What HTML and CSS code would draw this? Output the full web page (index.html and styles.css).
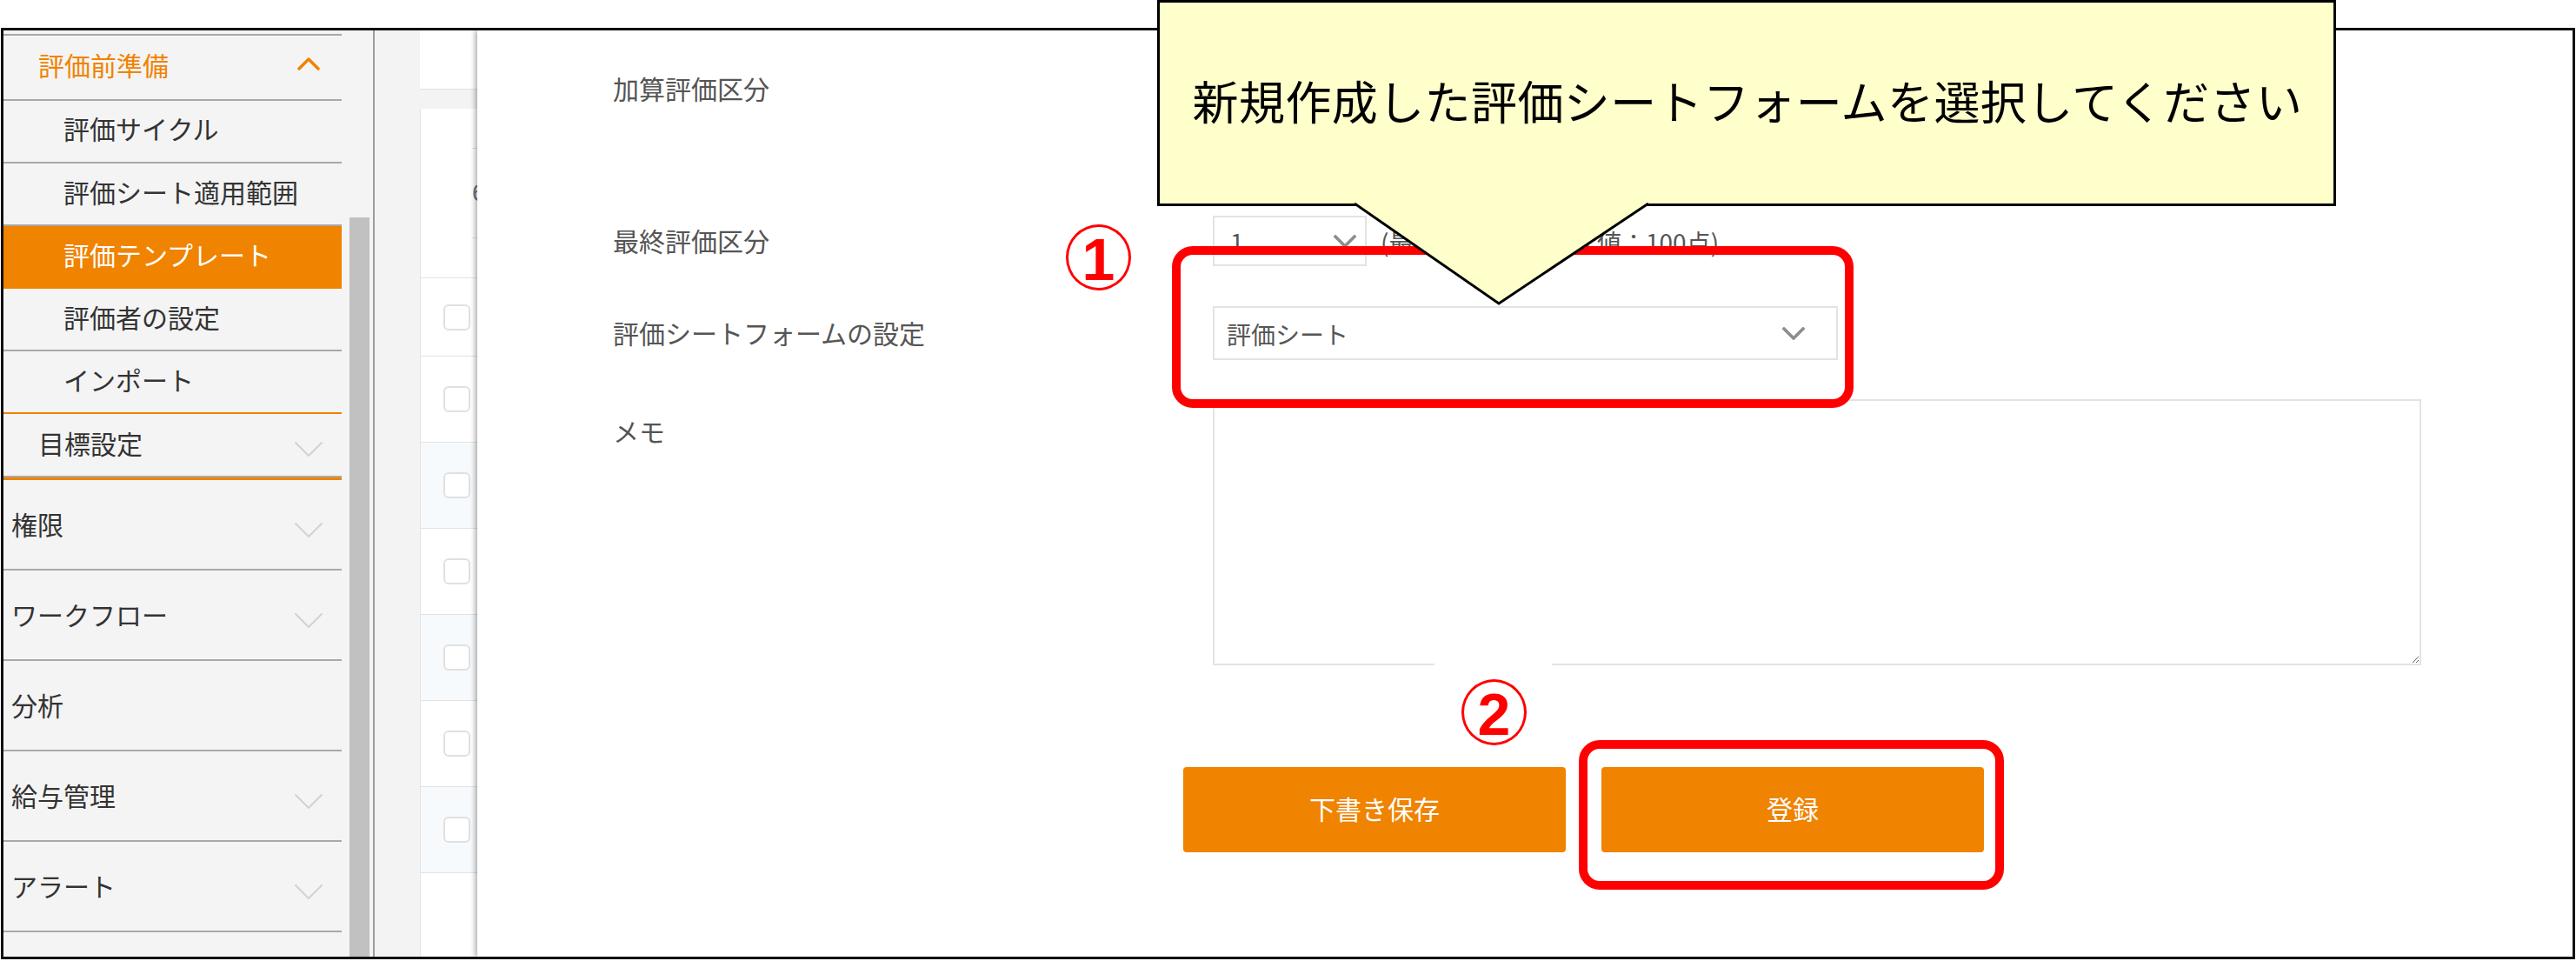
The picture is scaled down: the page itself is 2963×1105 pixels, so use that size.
FILE: index.html
```html
<!DOCTYPE html>
<html lang="ja">
<head>
<meta charset="utf-8">
<title>評価テンプレート</title>
<link rel="stylesheet" href="styles.css">
</head>
<body>
<div class="frame">
  <aside class="sidebar">
    <nav class="menu">
      <div class="menu-cut"></div>
      <div class="group">
        <div class="row grp open">
          <span>評価前準備</span>
          <svg class="chev up" viewBox="0 0 26 15" width="26" height="15"><polyline points="2,13 13,2 24,13"/></svg>
        </div>
        <div class="row sub">評価サイクル</div>
        <div class="row sub">評価シート適用範囲</div>
        <div class="row sub active">評価テンプレート</div>
        <div class="row sub">評価者の設定</div>
        <div class="row sub orange-line">インポート</div>
        <div class="row grp goal">
          <span>目標設定</span>
          <svg class="chev down" viewBox="0 0 32 18" width="32" height="18"><polyline points="1,1 16,16 31,1"/></svg>
        </div>
      </div>
      <div class="row top"><span>権限</span><svg class="chev down" viewBox="0 0 32 18" width="32" height="18"><polyline points="1,1 16,16 31,1"/></svg></div>
      <div class="row top"><span>ワークフロー</span><svg class="chev down" viewBox="0 0 32 18" width="32" height="18"><polyline points="1,1 16,16 31,1"/></svg></div>
      <div class="row top"><span>分析</span></div>
      <div class="row top"><span>給与管理</span><svg class="chev down" viewBox="0 0 32 18" width="32" height="18"><polyline points="1,1 16,16 31,1"/></svg></div>
      <div class="row top"><span>アラート</span><svg class="chev down" viewBox="0 0 32 18" width="32" height="18"><polyline points="1,1 16,16 31,1"/></svg></div>
    </nav>
    <div class="scroll"><div class="thumb"></div></div>
  </aside>

  <div class="gutter"></div>

  <section class="table-col">
    <div class="page-head"></div>
    <div class="table">
      <div class="thead"><div class="thead-inner">6</div></div>
      <div class="tr"><span class="cb"></span></div>
      <div class="tr"><span class="cb"></span></div>
      <div class="tr alt"><span class="cb"></span></div>
      <div class="tr"><span class="cb"></span></div>
      <div class="tr alt"><span class="cb"></span></div>
      <div class="tr"><span class="cb"></span></div>
      <div class="tr alt"><span class="cb"></span></div>
    </div>
  </section>

  <section class="modal">
    <div class="form-row r1">
      <label class="lbl">加算評価区分</label>
      <div class="field"></div>
    </div>
    <div class="form-row r2">
      <label class="lbl">最終評価区分</label>
      <div class="field inline">
        <div class="select small"><span>1</span><svg class="schev" viewBox="0 0 26 15" width="26" height="15"><polyline points="2,2 13,13 24,2"/></svg></div>
        <span class="note">(最小値：0点　最大値：100点)</span>
      </div>
    </div>
    <div class="form-row r3">
      <label class="lbl">評価シートフォームの設定</label>
      <div class="field">
        <div class="select wide"><span>評価シート</span><svg class="schev" viewBox="0 0 26 15" width="26" height="15"><polyline points="2,2 13,13 24,2"/></svg></div>
      </div>
    </div>
    <div class="form-row r4">
      <label class="lbl memo">メモ</label>
      <div class="field"><textarea class="memo-box"></textarea></div>
    </div>
    <div class="buttons">
      <button class="btn">下書き保存</button>
      <button class="btn">登録</button>
    </div>
  </section>
</div>

<div class="mark box1"></div>
<div class="mark box2"></div>
<div class="num n1"><span>1</span></div>
<div class="num-bg"><div class="num n2"><span>2</span></div></div>

<div class="tip">新規作成した評価シートフォームを選択してください</div>
<svg class="tip-arrow" viewBox="0 0 340 120" width="340" height="120">
  <polygon points="0,0 166,116 338,0" fill="#ffffcc"/>
  <polyline points="0,1 166,116 338,1" fill="none" stroke="#000" stroke-width="3"/>
</svg>
</body>
</html>
```

FILE: styles.css
```css
* { box-sizing: border-box; margin: 0; padding: 0; }
html, body { width: 2963px; height: 1105px; overflow: hidden; background: #fff; }
body {
  position: relative;
  font-family: "Noto Sans CJK JP", "Noto Sans", sans-serif;
  color: #333;
  padding-top: 32px;
  padding-left: 1px;
}

.frame {
  width: 2961px;
  height: 1071px;
  border: 3px solid #111;
  display: flex;
  overflow: hidden;
  background: #f3f3f3;
}

/* ---------- sidebar ---------- */
.sidebar {
  display: flex;
  width: 427px;
  flex: none;
  background: #f4f4f4;
  border-right: 2px solid #9c9c9c;
}
.menu { width: 389px; flex: none; }
.scroll { width: 36px; flex: none; padding: 215px 4px 0 9px; }
.thumb { width: 23px; height: 100%; background: #c1c1c1; }

.menu-cut { height: 6px; border-bottom: 2px solid #a9a9a9; }
.row {
  display: flex;
  align-items: center;
  justify-content: space-between;
  font-size: 30px;
  line-height: 1;
  border-bottom: 2px solid #a9a9a9;
  padding-bottom: 8px;
}
.group { border-bottom: 3px solid #f08300; }
.grp { height: 75px; padding-left: 40px; padding-right: 22px; }
.grp.open { color: #f08300; }
.grp.goal { height: 73px; padding-bottom: 6px; }
.sub { height: 72px; padding-left: 69px; padding-bottom: 6px; }
.sub:nth-child(2) { padding-bottom: 8px; }
.sub.active { background: #f08300; color: #fff; border-bottom-color: #f08300; }
.sub.orange-line { border-bottom-color: #f08300; }
.top { height: 104px; padding-left: 9px; padding-right: 22px; padding-bottom: 3px; }

.chev { fill: none; stroke-linecap: round; stroke-linejoin: round; }
.chev.up { stroke: #f08300; stroke-width: 3.5; margin-right: 3px; }
.chev.down { stroke: #d2d2d2; stroke-width: 2; margin-top: 16px; }

/* ---------- background page ---------- */
.gutter { width: 52px; flex: none; }
.table-col { width: 66px; flex: none; overflow: hidden; }
.page-head { height: 68px; background: #fff; border-bottom: 1px solid #e2e2e2; }
.table { margin-top: 22px; background: #fff; border-left: 1px solid #e4e4e4; height: 1000px; }
.thead { height: 195px; padding-top: 45px; padding-left: 59px; border-bottom: 1px solid #e2e2e2; }
.thead-inner {
  height: 104px;
  border-top: 1px solid #e2e2e2;
  border-bottom: 1px solid #e2e2e2;
  display: flex;
  align-items: center;
  font-family: "Liberation Sans", sans-serif;
  font-size: 28px;
  color: #6b7785;
}
.tr {
  height: 99px;
  border-bottom: 1px solid #e2e2e2;
  display: flex;
  align-items: center;
  padding-left: 26px;
}
.tr:nth-child(2) { height: 90px; }
.tr.alt { background: #f7fafc; }
.cb {
  width: 31px; height: 30px;
  border: 2px solid #e0e0e0;
  border-radius: 6px;
  background: #fff;
}

/* ---------- modal ---------- */
.modal {
  flex: 1;
  background: #fff;
  box-shadow: -3px 0 5px rgba(0,0,0,0.28);
  padding: 38px 0 0 156px;
  position: relative;
  z-index: 1;
}
.form-row {
  display: grid;
  grid-template-columns: 690px 1fr;
  align-items: center;
}
.r1 { height: 62px; }
.r2 { margin-top: 113px; height: 58px; }
.r3 { margin-top: 46px; height: 62px; }
.r4 { margin-top: 45px; align-items: start; }
.lbl { font-size: 30px; line-height: 1; color: #555; padding-bottom: 2px; }
.r1 .lbl { padding-bottom: 6px; }
.lbl.memo { padding-top: 21px; }
.field.inline { display: flex; align-items: center; gap: 16px; }

.select {
  display: flex;
  align-items: center;
  justify-content: space-between;
  border: 2px solid #e3e3e3;
  background: #fff;
  font-size: 28px;
  line-height: 1;
  color: #555;
}
.select span { padding-top: 2px; }
.select.small { width: 177px; height: 58px; padding: 0 10px 0 18px; }
.select.wide { width: 719px; height: 62px; padding: 0 36px 0 14px; }
.schev { fill: none; stroke: #8e8e8e; stroke-width: 3.8; stroke-linecap: round; stroke-linejoin: round; }
.note { font-size: 28px; line-height: 1; color: #555; padding-top: 2px; }

.memo-box {
  display: block;
  width: 1390px;
  height: 306px;
  border: 2px solid #e3e3e3;
  resize: both;
  font-family: inherit;
}

.buttons { display: flex; gap: 41px; margin-top: 117px; margin-left: 656px; }
.btn {
  width: 440px;
  height: 98px;
  background: #f08300;
  border: none;
  border-radius: 4px;
  color: #fff;
  font-family: "Noto Sans CJK JP", sans-serif;
  font-size: 30px;
  line-height: 1;
  padding-bottom: 4px;
}

/* ---------- annotations (overlay) ---------- */
.mark {
  position: absolute;
  border: 10px solid #ff0000;
  border-radius: 24px;
  z-index: 5;
}
.box1 { left: 1348px; top: 283px; width: 784px; height: 186px; }
.box2 { left: 1816px; top: 851px; width: 489px; height: 172px; }

.num {
  width: 75px; height: 76px;
  border: 3.5px solid #ff0000;
  border-radius: 50%;
  color: #ff0000;
  font-family: "Liberation Sans", sans-serif;
  font-weight: bold;
  font-size: 68px;
  line-height: 1;
  display: flex;
  align-items: center;
  justify-content: center;
  z-index: 5;
}
.num span { margin-top: 3px; }
.n1 { position: absolute; left: 1226px; top: 258px; }
.num-bg {
  position: absolute;
  left: 1650px; top: 757px;
  width: 135px; height: 120px;
  background: #fff;
  z-index: 5;
  padding: 24px 0 0 31px;
}

.tip {
  position: absolute;
  left: 1331px; top: 0;
  width: 1356px; height: 237px;
  border: 3px solid #000;
  background: #ffffcc;
  color: #000;
  font-size: 53px;
  letter-spacing: 0.4px;
  line-height: 1;
  display: flex;
  align-items: center;
  justify-content: center;
  padding: 0 0 6px 2px;
  z-index: 10;
}
.tip-arrow { position: absolute; left: 1558px; top: 233px; z-index: 11; }
```
